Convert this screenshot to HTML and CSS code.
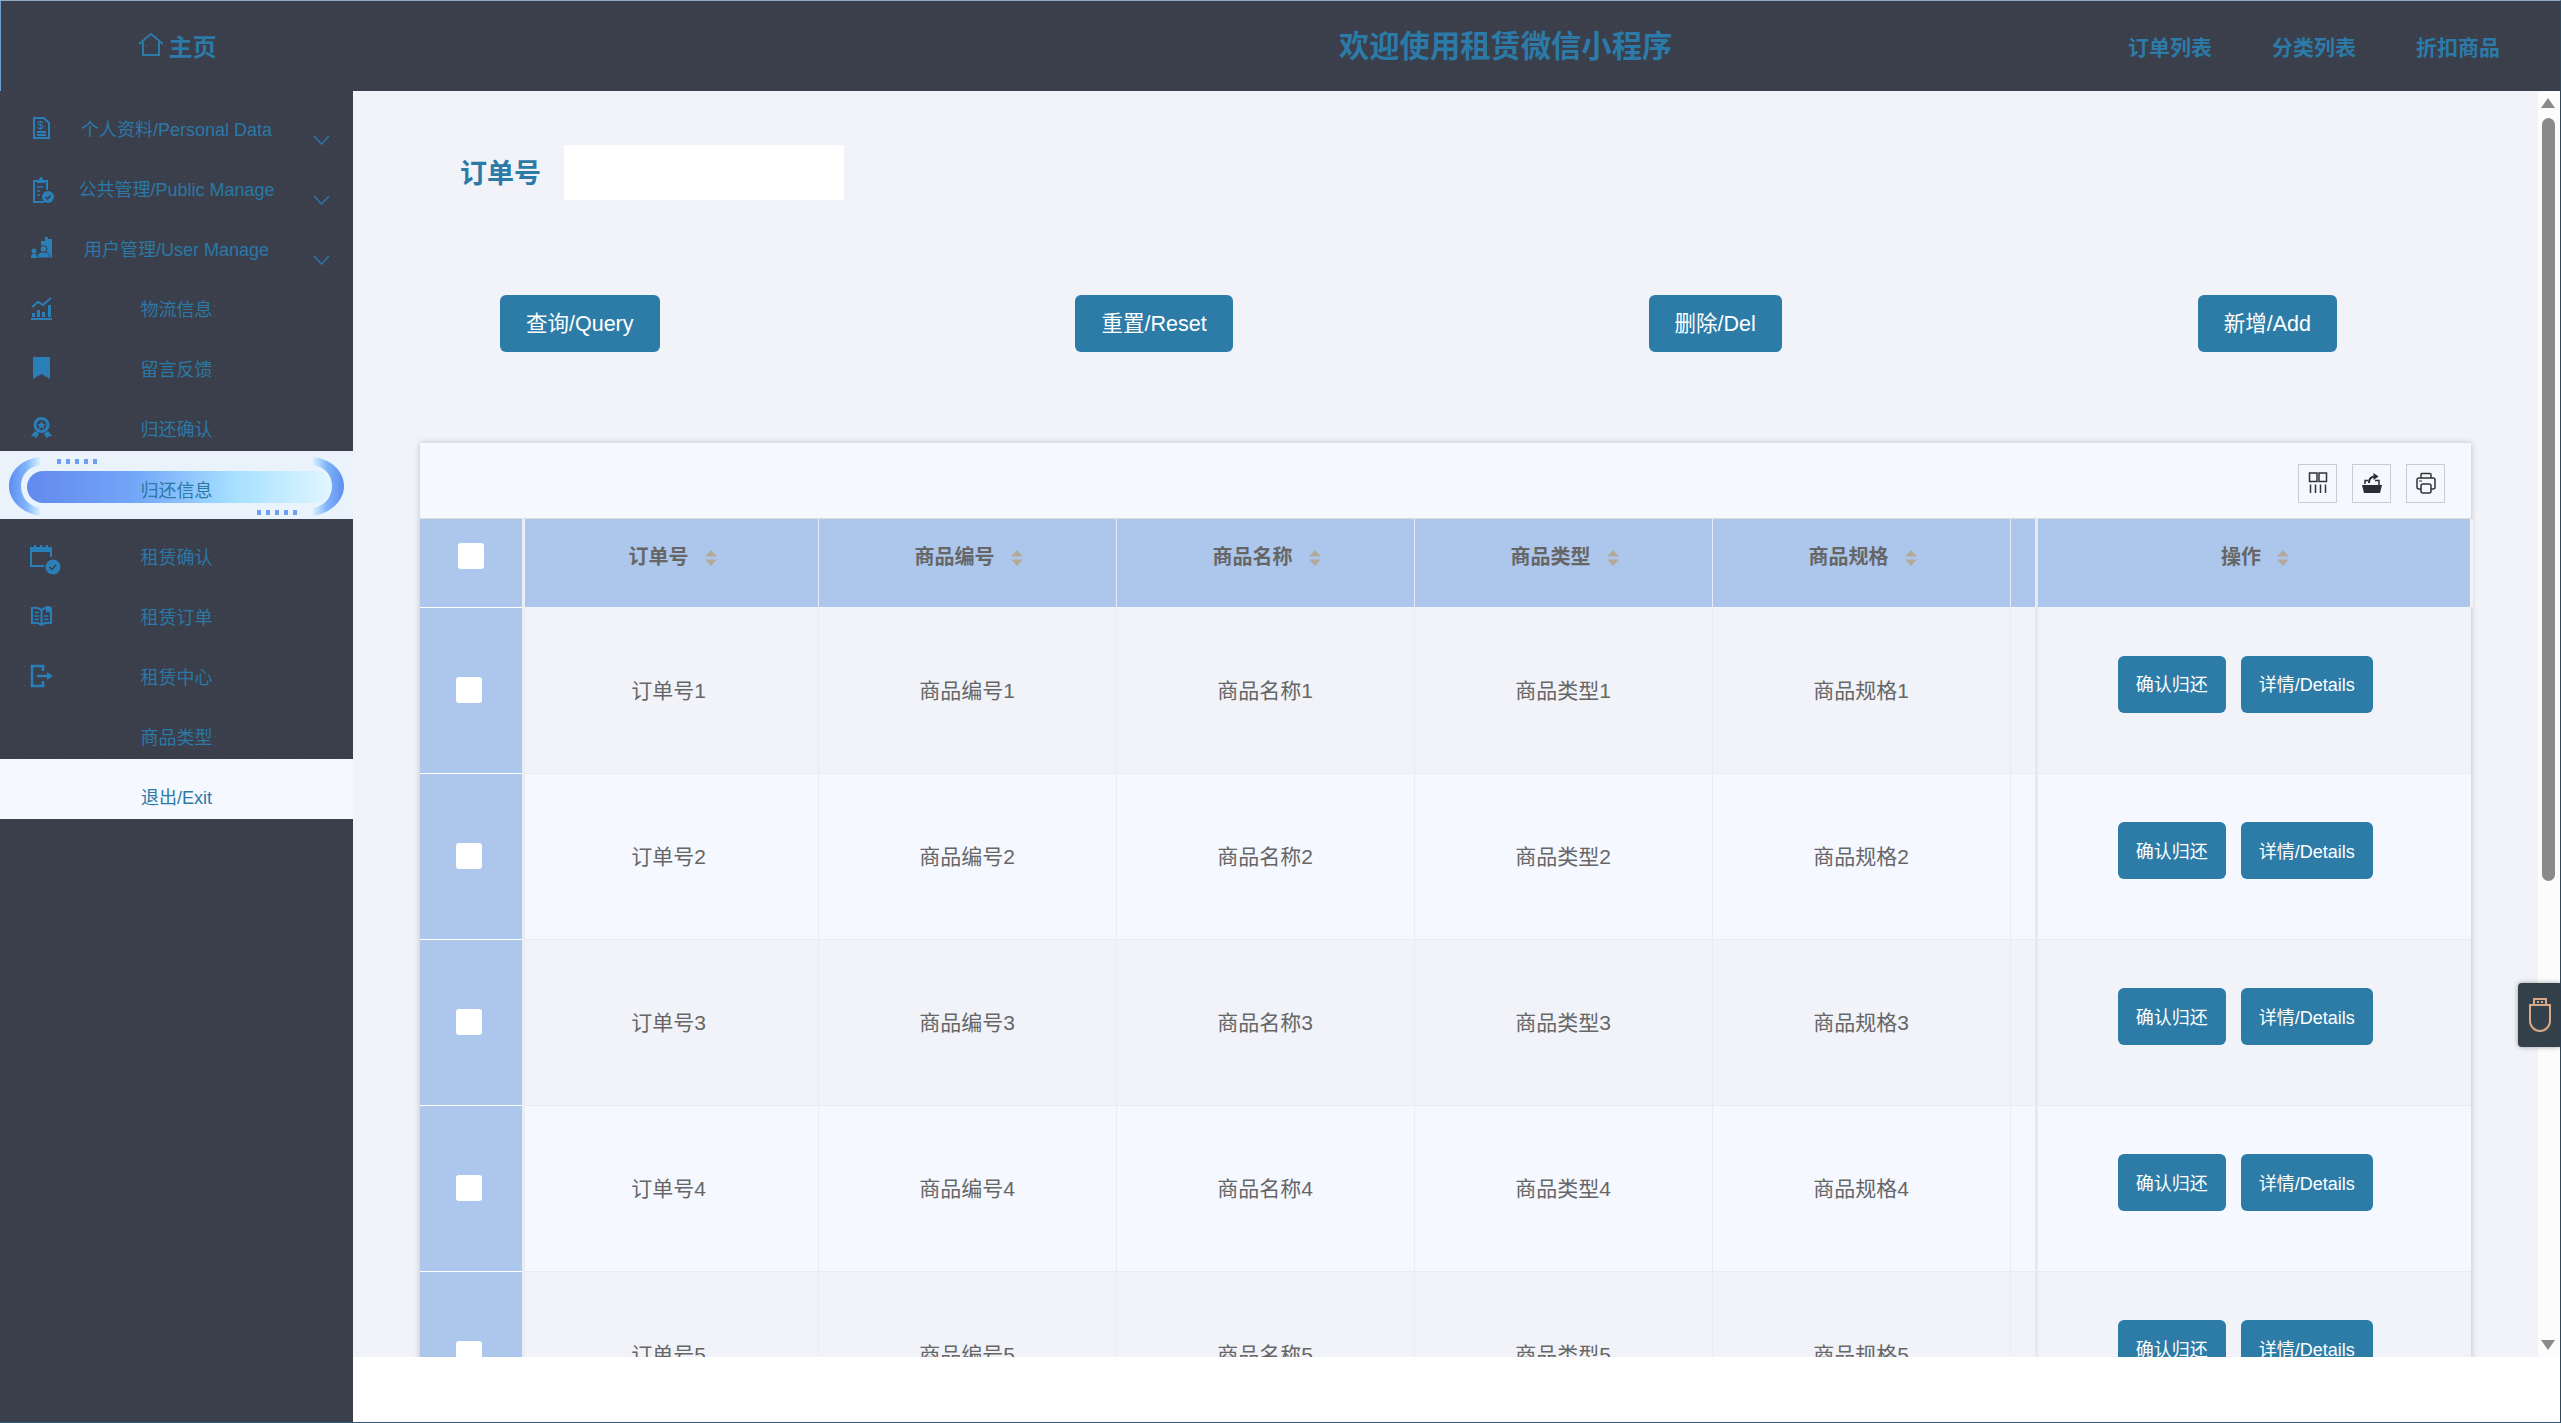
FILE: index.html
```html
<!DOCTYPE html>
<html lang="zh-CN">
<head>
  <meta charset="UTF-8" />
  <title>欢迎使用租赁微信小程序</title>
  <link rel="stylesheet" href="styles.css">
</head>
<body>
<div class="app">
  <header class="topbar">
    <div class="brand">
      <svg class="home-icon" width="26" height="26" viewBox="0 0 26 26" fill="none" stroke="currentColor" stroke-width="2"><path d="M1 12 13 2l12 10M5 10v13h16V10"/></svg>
      <span>主页</span>
    </div>
    <div class="title">欢迎使用租赁微信小程序</div>
    <nav class="topnav">
      <a>订单列表</a>
      <a>分类列表</a>
      <a>折扣商品</a>
    </nav>
  </header>

  <div class="layout">
    <aside class="sidebar">
      <div class="menu-item">
        <svg class="menu-icon" viewBox="0 0 28 28" fill="none" stroke="currentColor" stroke-width="2"><path d="M7 4h10l5 5v15H7z"/><path d="M10 18h9M10 21h9"/><text x="10.500" y="15" font-size="11" fill="currentColor" stroke="none" font-family="Liberation Sans">$</text></svg>
        <span class="menu-label">个人资料/Personal Data</span>
        <svg class="chevron" width="17" height="10" viewBox="0 0 17 10" fill="none" stroke="currentColor" stroke-width="1.5"><path d="M1 1l7.500 8L16 1"/></svg>
      </div>
      <div class="menu-item">
        <svg class="menu-icon" viewBox="0 0 28 28" fill="none" stroke="currentColor" stroke-width="2"><path d="M17 7h3v9M10 7H7v21h10"/><path d="M10 9V6h2l1-3 2 0 1 3h2v3z" fill="currentColor" stroke="none"/><path d="M10 13h6M10 17h3M10 21h3" stroke-width="1.500"/><circle cx="21" cy="23" r="6" fill="currentColor" stroke="none"/><path d="M18.500 23l2 2 3-3.500" stroke="#3a3f4b" stroke-width="1.500"/></svg>
        <span class="menu-label">公共管理/Public Manage</span>
        <svg class="chevron" width="17" height="10" viewBox="0 0 17 10" fill="none" stroke="currentColor" stroke-width="1.5"><path d="M1 1l7.500 8L16 1"/></svg>
      </div>
      <div class="menu-item">
        <svg class="menu-icon" viewBox="0 0 28 28" fill="currentColor"><path d="M14 7h4V3h3v2h4v19H14z"/><circle cx="16.500" cy="15" r="3.500" stroke="#3a3f4b"/><path d="M10 24c0-4 2-6 6.500-6s6.500 2 6.500 6z" stroke="#3a3f4b"/><circle cx="7" cy="17" r="2.500"/><path d="M4 24c0-3 1-4.500 3-4.500s3 1.500 3 4.500z"/></svg>
        <span class="menu-label">用户管理/User Manage</span>
        <svg class="chevron" width="17" height="10" viewBox="0 0 17 10" fill="none" stroke="currentColor" stroke-width="1.5"><path d="M1 1l7.500 8L16 1"/></svg>
      </div>
      <div class="menu-item">
        <svg class="menu-icon" viewBox="0 0 28 28" fill="currentColor"><path d="M4 24h21v2H4z"/><path d="M5 19h3v4H5zM10 16h3v7h-3zM15 18h3v5h-3zM21 11h3v12h-3z"/><path d="M5 13l6-5 5 3 8-7" fill="none" stroke="currentColor" stroke-width="2"/></svg>
        <span class="menu-label">物流信息</span>
      </div>
      <div class="menu-item">
        <svg class="menu-icon" viewBox="0 0 28 28" fill="currentColor"><path d="M6 3h17v22l-8.500-5L6 25z"/></svg>
        <span class="menu-label">留言反馈</span>
      </div>
      <div class="menu-item">
        <svg class="menu-icon" viewBox="0 0 28 28" fill="none" stroke="currentColor" stroke-width="3"><circle cx="14.500" cy="11" r="6.500"/><path d="M14.500 7l1.300 2.700 3 .4-2.200 2 .6 3-2.700-1.500-2.700 1.500.6-3-2.200-2 3-.4z" fill="currentColor" stroke="none"/><path d="M8 17l-4 5 4 .5 1 2 3-5zM21 17l4 5-4 .5-1 2-3-5z" fill="currentColor" stroke="none"/></svg>
        <span class="menu-label">归还确认</span>
      </div>
      <div class="menu-item active">
        <svg class="active-art" width="353" height="68" viewBox="0 0 353 68">
          <defs>
            <linearGradient id="pill" x1="0" x2="1" y1="0" y2="0">
              <stop offset="0" stop-color="#6389ee"/>
              <stop offset=".35" stop-color="#72a6f8"/>
              <stop offset=".68" stop-color="#a6e0ff"/>
              <stop offset="1" stop-color="#e2f6ff"/>
            </linearGradient>
            <linearGradient id="arcL" x1="0" x2="1" y1="0" y2="0">
              <stop offset="0" stop-color="#5d8df0"/>
              <stop offset=".55" stop-color="#7fb4fa"/>
              <stop offset="1" stop-color="#d6f1ff"/>
            </linearGradient>
            <linearGradient id="arcR" x1="1" x2="0" y1="0" y2="0">
              <stop offset="0" stop-color="#5d8df0"/>
              <stop offset=".55" stop-color="#7fb4fa"/>
              <stop offset="1" stop-color="#d6f1ff"/>
            </linearGradient>
          </defs>
          <rect x="27" y="20" width="305" height="32" rx="16" fill="url(#pill)"/>
          <path d="M40 6C22 8 9 20 9 35s13 27 31 30v-8c-12-2-19-11-19-22s7-19 19-21z" fill="url(#arcL)"/>
          <path d="M313 6c18 2 31 14 31 29s-13 27-31 30v-8c12-2 19-11 19-22s-7-19-19-21z" fill="url(#arcR)"/>
          <g fill="#6f9ff5">
            <rect x="57" y="8" width="4" height="5"/><rect x="66" y="8" width="4" height="5"/><rect x="75" y="8" width="4" height="5"/><rect x="84" y="8" width="4" height="5"/><rect x="93" y="8" width="4" height="5"/>
            <rect x="257" y="59" width="4" height="5"/><rect x="266" y="59" width="4" height="5"/><rect x="275" y="59" width="4" height="5"/><rect x="284" y="59" width="4" height="5"/><rect x="293" y="59" width="4" height="5"/>
          </g>
        </svg>
        <span class="menu-label">归还信息</span>
      </div>
      <div class="menu-item">
        <svg class="menu-icon" viewBox="0 0 28 28" fill="none" stroke="currentColor" stroke-width="2"><path d="M24 15V6H4v18h13"/><path d="M4 8h20" stroke-width="4"/><path d="M8 3v4M14 3v4M20 3v4"/><circle cx="26" cy="25" r="7.500" fill="currentColor" stroke="none"/><path d="M22.500 25l2.500 2.500 4-4.500" stroke="#3a3f4b" stroke-width="1.500"/></svg>
        <span class="menu-label">租赁确认</span>
      </div>
      <div class="menu-item">
        <svg class="menu-icon" viewBox="0 0 28 28" fill="none" stroke="currentColor" stroke-width="2"><path d="M14.500 8C12 6 8 5.500 5 6v15c3-.5 7 0 9.500 2 2.500-2 6.500-2.500 9.500-2V6c-3-.5-7 0-9.500 2zM14.500 8v15"/><path d="M7.500 10.500h4.500M7.500 14h4.500M7.500 17.500h4.500M17 14h4.500M17 17.500h4.500" stroke-width="1.500"/><path d="M19 4h4v7l-2-1.500L19 11z" fill="currentColor" stroke="none"/></svg>
        <span class="menu-label">租赁订单</span>
      </div>
      <div class="menu-item">
        <svg class="menu-icon" viewBox="0 0 28 28" fill="none" stroke="currentColor" stroke-width="2.500"><path d="M16 9V4H5v20h11v-5"/><path d="M10 14h11"/><path d="M20 10l6 4-6 4z" fill="currentColor" stroke="none"/></svg>
        <span class="menu-label">租赁中心</span>
      </div>
      <div class="menu-item">
        <span class="menu-label">商品类型</span>
      </div>
      <div class="menu-item exit">
        <span class="menu-label">退出/Exit</span>
      </div>
    </aside>

    <div class="main">
      <div class="viewport">
        <div class="page">
          <div class="search-row">
            <label class="search-label">订单号</label>
            <input class="search-input" type="text" />
          </div>

          <div class="action-row">
            <button class="btn">查询/Query</button>
            <button class="btn">重置/Reset</button>
            <button class="btn">删除/Del</button>
            <button class="btn">新增/Add</button>
          </div>

          <div class="card">
            <div class="toolbar">
              <span class="tool">
                <svg width="20" height="22" viewBox="0 0 20 22" fill="none" stroke="#333" stroke-width="1.500"><rect x="1.500" y="1" width="7.500" height="8.500"/><rect x="11" y="1" width="7.500" height="8.500"/><path d="M2.500 12.500v8.500M7.500 12.500v8.500M12.500 12.500v8.500M17.500 12.500v8.500"/></svg>
              </span>
              <span class="tool">
                <svg width="20" height="22" viewBox="0 0 20 22" fill="none" stroke="#2a2d33" stroke-width="1.500"><path d="M3 12V8.500h3M13 8.500h4V13"/><path d="M7 11c0-4 2-6.500 6-6.500" stroke-width="2"/><path d="M11.500 1l5 3.500-5 3.500z" fill="#2a2d33" stroke="none"/><path d="M0 13h20l-2 8H2z" fill="#2a2d33" stroke="none"/></svg>
              </span>
              <span class="tool">
                <svg width="20" height="22" viewBox="0 0 20 22" fill="none" stroke="#333" stroke-width="1.500"><path d="M5 6V2.500a1 1 0 0 1 1-1h8a1 1 0 0 1 1 1V6"/><path d="M5 17H3a2 2 0 0 1-2-2V8a2 2 0 0 1 2-2h14a2 2 0 0 1 2 2v7a2 2 0 0 1-2 2h-2"/><rect x="5" y="12" width="10" height="9" rx="2"/><path d="M3 9h3" stroke-width="1"/></svg>
              </span>
            </div>

            <table class="grid">
              <colgroup>
                <col class="col-check"><col class="col-first"><col class="col-data"><col class="col-data"><col class="col-data"><col class="col-data"><col class="col-filler"><col class="col-op">
              </colgroup>
              <thead>
                <tr>
                  <th class="check-cell"><span class="check"></span></th>
                  <th>订单号<svg class="sort" width="12" height="16" viewBox="0 0 12 16"><path d="M6 0l6 6.500H0zM6 16l6-6.500H0z"/></svg></th>
                  <th>商品编号<svg class="sort" width="12" height="16" viewBox="0 0 12 16"><path d="M6 0l6 6.500H0zM6 16l6-6.500H0z"/></svg></th>
                  <th>商品名称<svg class="sort" width="12" height="16" viewBox="0 0 12 16"><path d="M6 0l6 6.500H0zM6 16l6-6.500H0z"/></svg></th>
                  <th>商品类型<svg class="sort" width="12" height="16" viewBox="0 0 12 16"><path d="M6 0l6 6.500H0zM6 16l6-6.500H0z"/></svg></th>
                  <th>商品规格<svg class="sort" width="12" height="16" viewBox="0 0 12 16"><path d="M6 0l6 6.500H0zM6 16l6-6.500H0z"/></svg></th>
                  <th></th>
                  <th class="op-head">操作<svg class="sort" width="12" height="16" viewBox="0 0 12 16"><path d="M6 0l6 6.500H0zM6 16l6-6.500H0z"/></svg></th>
                </tr>
              </thead>
              <tbody>
                <tr>
                  <td class="check-cell"><span class="check"></span></td>
                  <td class="first-cell">订单号1</td><td>商品编号1</td><td>商品名称1</td><td>商品类型1</td><td>商品规格1</td><td></td>
                  <td class="op-cell"><div class="op-btns"><button class="btn btn-sm">确认归还</button><button class="btn btn-sm">详情/Details</button></div></td>
                </tr>
                <tr>
                  <td class="check-cell"><span class="check"></span></td>
                  <td class="first-cell">订单号2</td><td>商品编号2</td><td>商品名称2</td><td>商品类型2</td><td>商品规格2</td><td></td>
                  <td class="op-cell"><div class="op-btns"><button class="btn btn-sm">确认归还</button><button class="btn btn-sm">详情/Details</button></div></td>
                </tr>
                <tr>
                  <td class="check-cell"><span class="check"></span></td>
                  <td class="first-cell">订单号3</td><td>商品编号3</td><td>商品名称3</td><td>商品类型3</td><td>商品规格3</td><td></td>
                  <td class="op-cell"><div class="op-btns"><button class="btn btn-sm">确认归还</button><button class="btn btn-sm">详情/Details</button></div></td>
                </tr>
                <tr>
                  <td class="check-cell"><span class="check"></span></td>
                  <td class="first-cell">订单号4</td><td>商品编号4</td><td>商品名称4</td><td>商品类型4</td><td>商品规格4</td><td></td>
                  <td class="op-cell"><div class="op-btns"><button class="btn btn-sm">确认归还</button><button class="btn btn-sm">详情/Details</button></div></td>
                </tr>
                <tr>
                  <td class="check-cell"><span class="check"></span></td>
                  <td class="first-cell">订单号5</td><td>商品编号5</td><td>商品名称5</td><td>商品类型5</td><td>商品规格5</td><td></td>
                  <td class="op-cell"><div class="op-btns"><button class="btn btn-sm">确认归还</button><button class="btn btn-sm">详情/Details</button></div></td>
                </tr>
              </tbody>
            </table>
          </div>
        </div>

        <div class="scrollbar">
          <span class="arrow-up"></span>
          <span class="thumb"></span>
          <span class="arrow-down"></span>
        </div>

        <div class="float-tab">
          <svg width="24" height="36" viewBox="0 0 24 36" fill="none" stroke="#d9a987" stroke-width="2"><path d="M6 8V2h12v6M2 8h20v16a10 10 0 0 1-20 0z"/><path d="M9 5h2M13 5h2" stroke-width="2"/></svg>
        </div>
      </div>
      <div class="foot"></div>
    </div>
  </div>
</div>
</body>
</html>
```

FILE: styles.css
```css
* {
  box-sizing: border-box;
}

html, body {
  margin: 0;
  height: 100%;
}

body {
  font-family: "Liberation Sans", "Noto Sans CJK SC", sans-serif;
  color: #666;
  overflow: hidden;
}

.app {
  height: 100vh;
  display: flex;
  flex-direction: column;
  background: #3a3f4b;
  border-top: 1px solid #8fb0c4;
  border-right: 1px solid #33475a;
  border-bottom: 1px solid #2f5a70;
}

/* top bar */
.topbar {
  height: 90px;
  flex: none;
  display: flex;
  align-items: center;
  color: #2c7aa8;
  font-weight: bold;
  border-left: 1px solid #6fa0d0;
  background-color: #3a3f4b;
  background-image: radial-gradient(#40454f 1px, transparent 1px);
  background-size: 10px 10px;
}

.brand {
  width: 352px;
  flex: none;
  display: flex;
  justify-content: center;
  align-items: center;
  gap: 5px;
  padding-bottom: 2px;
  font-size: 24px;
}

.title {
  margin-left: 986px;
  padding-bottom: 4px;
  font-size: 30.3px;
}

.topnav {
  margin-left: auto;
  padding-right: 60px;
  display: flex;
  gap: 60px;
  font-size: 21px;
}

.layout {
  flex: 1;
  min-height: 0;
  display: flex;
}

/* sidebar */
.sidebar {
  width: 353px;
  flex: none;
  background-color: #3a3f4b;
  background-image: radial-gradient(#40454f 1px, transparent 1px);
  background-size: 10px 10px;
}

.menu-item {
  position: relative;
  height: 60px;
  padding-top: 18px;
  display: grid;
  grid-template-columns: 70px 1fr 70px;
  align-items: center;
  color: #2c78a6;
  font-size: 18px;
  line-height: 42px;
}

.menu-icon {
  grid-column: 1;
  width: 28px;
  height: 28px;
  margin: -4px 0 0 27px;
  color: #2b7fb8;
  overflow: visible;
}

.menu-label {
  grid-column: 2;
  position: relative;
  text-align: center;
  white-space: nowrap;
}

.chevron {
  grid-column: 3;
  margin: 20px 0 0 30px;
}

.menu-item.active {
  height: 68px;
  padding-top: 11px;
  background: #eaf3fb;
}

.active-art {
  position: absolute;
  left: 0;
  top: 0;
}

.menu-item.exit {
  background: #f5f8ff;
}

/* main area */
.main {
  flex: 1;
  min-width: 0;
  display: flex;
  flex-direction: column;
  background: #fff;
}

.viewport {
  position: relative;
  height: 1266px;
  flex: none;
  display: flex;
}

.foot {
  flex: 1;
  background: #fff;
}

.page {
  flex: 1;
  min-width: 0;
  overflow: hidden;
  background: #f1f3f8;
  padding-top: 54px;
}

.search-row {
  display: flex;
  align-items: center;
  gap: 23px;
  padding-left: 107px;
}

.search-label {
  padding-bottom: 2px;
  font-size: 27px;
  font-weight: bold;
  color: #2c7aa8;
}

.search-input {
  width: 280px;
  height: 55px;
  border: none;
  border-radius: 2px;
  background: #fff;
}

.action-row {
  display: flex;
  justify-content: space-between;
  margin-top: 95px;
  padding: 0 201px 0 147px;
}

.btn {
  height: 57px;
  padding: 0 26px 4px;
  border: none;
  border-radius: 6px;
  background: #2d7ca8;
  color: #fff;
  font-family: inherit;
  font-size: 21.5px;
  white-space: nowrap;
}

.btn-sm {
  padding: 0 18px 2px;
  font-size: 18px;
}

/* card + table */
.card {
  margin: 91px 67px 0 67px;
  background: #f5f8ff;
  box-shadow: 0 0 6px rgba(0, 0, 0, .22);
}

.toolbar {
  height: 76px;
  display: flex;
  justify-content: flex-end;
  align-items: center;
  gap: 15px;
  padding: 5px 26px 0 0;
  border-bottom: 1px solid #ddd;
}

.tool {
  width: 39px;
  height: 39px;
  display: flex;
  align-items: center;
  justify-content: center;
  border: 1px solid #ccc;
}

.grid {
  width: 2051px;
  table-layout: fixed;
  border-collapse: collapse;
  text-align: center;
}

.col-check { width: 103px; }
.col-first { width: 295px; }
.col-data { width: 298px; }
.col-filler { width: 26px; }
.col-op { width: 435px; }

.grid th {
  height: 88px;
  padding: 0 0 16px 3px;
  background: #adc6ec;
  color: #666;
  font-size: 20px;
  font-weight: bold;
  border-right: 1px solid #e4ecf8;
}

.sort {
  margin-left: 16px;
  vertical-align: -2px;
  fill: #b3aa9c;
}

.grid td {
  height: 166px;
  padding: 0 0 2px;
  font-size: 21px;
  color: #666;
  background: #f1f3f8;
  border-right: 1px solid #e9ecf2;
  border-bottom: 1px solid #e8ebf1;
}

.grid .first-cell {
  padding-right: 5px;
}

.grid tbody tr:nth-child(even) td {
  background: #f5f8ff;
}

.grid th.check-cell {
  padding: 0 0 14px;
  border-right: 3px solid #e9edf4;
  border-bottom: 1px solid #fff;
}

.grid td.check-cell,
.grid tbody tr:nth-child(even) td.check-cell {
  background: #adc6ec;
  border-right: 3px solid #e9edf4;
  border-bottom: 1px solid #fff;
  padding: 0 3px 0 0;
}

.check {
  display: inline-block;
  width: 26px;
  height: 26px;
  border-radius: 3px;
  background: #fff;
  vertical-align: middle;
}

.grid .op-head {
  position: relative;
  z-index: 1;
  border-left: 3px solid #e6e9ef;
  border-right: 3px solid #f1f3f8;
  box-shadow: 0 2px 0 #adc6ec;
}

.grid .op-cell {
  border-left: 3px solid #e6e9ef;
  border-right: none;
}

.op-btns {
  display: flex;
  justify-content: center;
  gap: 15px;
  padding: 0 18px 9px 0;
}

/* fake scrollbar */
.scrollbar {
  width: 22px;
  flex: none;
  display: flex;
  flex-direction: column;
  align-items: center;
  padding: 7px 2px 7px 0;
  background: #fcfcfd;
}

.arrow-up,
.arrow-down {
  width: 0;
  height: 0;
  border-left: 7px solid transparent;
  border-right: 7px solid transparent;
}

.arrow-up {
  border-bottom: 10px solid #8c898c;
}

.arrow-down {
  margin-top: auto;
  border-top: 10px solid #8c898c;
}

.thumb {
  width: 13px;
  height: 763px;
  margin-top: 10px;
  border-radius: 7px;
  background: #8c898c;
}

.float-tab {
  position: absolute;
  right: 0;
  top: 892px;
  width: 42px;
  height: 64px;
  display: flex;
  align-items: center;
  padding-left: 10px;
  background: #34404a;
  border-radius: 4px 0 0 4px;
  box-shadow: 0 0 5px rgba(0, 0, 0, .35);
}
```
